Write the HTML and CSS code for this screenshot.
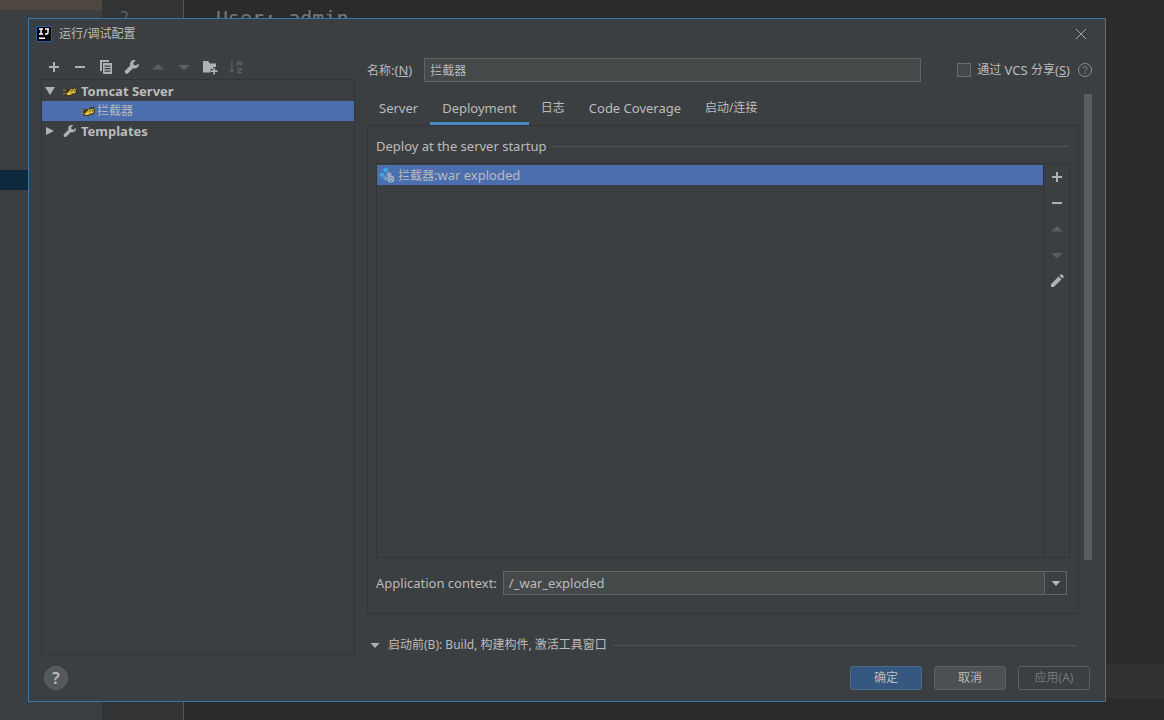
FILE: index.html
```html
<!DOCTYPE html>
<html lang="zh-CN">
<head>
<meta charset="utf-8">
<title>运行/调试配置</title>
<link rel="stylesheet" href="styles.css">
</head>
<body>
<svg class="defs" aria-hidden="true">
  <symbol id="plus" viewBox="0 0 16 16"><path d="M7 3h2v4h4v2H9v4H7V9H3V7h4z"/></symbol>
  <symbol id="minus" viewBox="0 0 16 16"><path d="M3 7h10v2H3z"/></symbol>
  <symbol id="copy" viewBox="0 0 16 16"><path d="M2 1h9v2H4v9H2zM5 4h9v11H5zM6.500 6.500v1.200h6V6.500zm0 2.500v1.200h6V9zm0 2.500v1.200h6v-1.200z" fill-rule="evenodd"/></symbol>
  <symbol id="wrench" viewBox="0 0 16 16"><path d="M14.600 4.200l-2.500 2.300-2.300-.500-.500-2.200 2.400-2.400C9.900.700 7.800 1.200 6.700 2.700c-.9 1.200-.9 2.600-.4 3.800l-5 5c-.8.800-.8 2 0 2.700.8.800 2 .800 2.700 0l5.100-5c1.500.600 3.300.300 4.500-.900 1.100-1.100 1.400-2.700 1-4.100z"/></symbol>
  <symbol id="up" viewBox="0 0 16 16"><path d="M2 10.500h12L8 5z"/></symbol>
  <symbol id="down" viewBox="0 0 16 16"><path d="M2 6h12l-6 5.500z"/></symbol>
  <symbol id="folder" viewBox="0 0 16 16"><path d="M1 2h5l2 2.500h6V8h-3v2H8.500v3.500H1z"/><path d="M11.300 9h1.700v2.200h2.500V13H13v2.500h-1.700V13H9v-1.800h2.300z"/></symbol>
  <symbol id="sort" viewBox="0 0 16 16"><path d="M3.200 2h1.300v9h2L3.800 14 1 11h2.200zM9 7V4.200C9 1.300 14 1.300 14 4.200V7h-1.300V5.600h-2.400V7zm1.300-2.500h2.400c-.2-1.300-2.200-1.300-2.400 0zM9 9h5v1.200L10.900 13H14v1.200H9V13l3.100-2.800H9z"/></symbol>
  <symbol id="pencil" viewBox="0 0 16 16"><path d="M2 11.200L9.600 3.600l2.800 2.800L4.800 14H2zM10.500 2.700l1-1c.6-.6 1.300-.6 1.800 0l1 1c.6.500.6 1.200 0 1.800l-1 1z"/></symbol>
  <symbol id="caret" viewBox="0 0 16 16"><path d="M3.500 6h9L8 11z"/></symbol>
  <symbol id="tomcat" viewBox="0 0 16 16"><path d="M1 6l4 0 3 0 2-2 5-1 1 6-2 3-3 0-2 2-6-1-2-2 2-2z" fill="#38321c"/><path d="M4 11l4-4 2-2 1.500 1.500L14 4.500l.8 4.500-2.300 2-2-.400L9 12.500l-5-.500z" fill="#d9b431"/><path d="M0 6.500l4 1M0 11.500l4-1M8.500 6l2 1" stroke="#b98b25" fill="none"/><path d="M9.500 7.500h1.400v1.200H9.500zM12.500 7h1.200v1.200h-1.200z" fill="#25221a"/><path d="M5 12l3-.500M11 9.500h2" stroke="#f4df83"/></symbol>
  <symbol id="artifact" viewBox="0 0 16 16"><path d="M6.500 0l3 3-3 3-3-3zM3 5l3 3-3 3-3-3z" fill="#40a8dd"/><path d="M10 4.500l3 3-3 3-3-3z" fill="#91a8bd"/><path d="M6.500 8.500l2.700 2.700-2.700 2.700-2.700-2.700z" fill="#6f9bc2"/><circle cx="11.800" cy="12" r="3.500" fill="#a4b5c8"/><path d="M10 12.500c1-2.500 3-2 3.500-1M10.500 13.500c1 .700 2.500.300 3-1" fill="none" stroke="#52709d"/></symbol>
</svg>

<div class="editor" aria-hidden="true">
  <div class="project"><div class="project-tab"></div><div class="project-row"></div></div>
  <div class="gutter">2</div>
  <div class="code"><span>User: admin</span><div class="caret-row"></div></div>
</div>

<main class="dialog">
  <header class="titlebar">
    <svg class="logo" viewBox="0 0 16 16" aria-hidden="true"><rect x=".5" y=".5" width="15" height="15" fill="#05070d" stroke="#285d9f"/><path d="M3 3h4M5 3v5M3 8h4M9 3h4M12 3v3.500Q12 8 10.500 8H9" fill="none" stroke="#fff" stroke-width="1.400"/><path d="M3 11.500h6v1.500H3z" fill="#fff"/></svg>
    <h1>运行/调试配置</h1>
    <button class="close" aria-label="关闭"><svg viewBox="0 0 12 12"><path d="M1 1l10 10M11 1L1 11" fill="none" stroke="currentColor"/></svg></button>
  </header>

  <div class="content">
    <aside class="sidebar">
      <div class="toolbar">
        <button aria-label="添加"><svg class="icon"><use href="#plus"/></svg></button>
        <button aria-label="移除"><svg class="icon"><use href="#minus"/></svg></button>
        <button aria-label="复制"><svg class="icon"><use href="#copy"/></svg></button>
        <button aria-label="编辑模板"><svg class="icon"><use href="#wrench"/></svg></button>
        <button aria-label="上移" disabled><svg class="icon"><use href="#up"/></svg></button>
        <button aria-label="下移" disabled><svg class="icon"><use href="#down"/></svg></button>
        <button aria-label="新建文件夹"><svg class="icon"><use href="#folder"/></svg></button>
        <button aria-label="排序" disabled><svg class="icon"><use href="#sort"/></svg></button>
      </div>
      <ul class="tree" role="tree">
        <li class="group" role="treeitem" aria-expanded="true"><svg class="twisty" viewBox="0 0 10 10"><path d="M0 1h10L5 9z"/></svg><svg class="node-icon"><use href="#tomcat"/></svg>Tomcat Server</li>
        <li class="leaf selected" role="treeitem" aria-selected="true"><svg class="node-icon"><use href="#tomcat"/></svg><span class="cjk">拦截器</span></li>
        <li class="group" role="treeitem" aria-expanded="false"><svg class="twisty" viewBox="0 0 10 10"><path d="M1 1v8l8-4z"/></svg><svg class="node-icon"><use href="#wrench"/></svg>Templates</li>
      </ul>
    </aside>

    <section class="settings">
      <div class="name-row">
        <label for="name"><span class="cjk">名称</span>:(<u>N</u>)</label>
        <input class="field cjk" id="name" type="text" value="拦截器">
        <label class="share"><input type="checkbox"><span class="cjk">通过</span> VCS <span class="cjk">分享</span>(<u>S</u>)</label>
        <button class="hint" aria-label="帮助"><svg viewBox="0 0 16 16"><circle cx="8" cy="8" r="6.500"/><path d="M6 6.500c0-2.600 4-2.600 4 0C10 8 8 8 8 9.500M8 10.700V12"/></svg></button>
      </div>
      <div class="scroll">
        <div class="scroll-body">
          <div class="tabs" role="tablist">
            <button role="tab">Server</button>
            <button role="tab" class="active" aria-selected="true">Deployment</button>
            <button role="tab" class="cjk">日志</button>
            <button role="tab">Code Coverage</button>
            <button role="tab" class="cjk">启动/连接</button>
          </div>
          <div class="panel" role="tabpanel">
            <h2 class="rule">Deploy at the server startup</h2>
            <div class="deploy">
              <ul class="artifacts">
                <li><svg class="icon"><use href="#artifact"/></svg><span><span class="cjk">拦截器</span>:war exploded</span></li>
              </ul>
              <div class="side-tools">
                <button aria-label="添加"><svg class="icon"><use href="#plus"/></svg></button>
                <button aria-label="移除"><svg class="icon"><use href="#minus"/></svg></button>
                <button aria-label="上移" disabled><svg class="icon"><use href="#up"/></svg></button>
                <button aria-label="下移" disabled><svg class="icon"><use href="#down"/></svg></button>
                <button aria-label="编辑"><svg class="icon"><use href="#pencil"/></svg></button>
              </div>
            </div>
            <div class="context">
              <label for="context">Application context:</label>
              <div class="combo"><input id="context" type="text" value="/_war_exploded"><button aria-label="展开"><svg class="icon"><use href="#caret"/></svg></button></div>
            </div>
          </div>
          <button class="before rule cjk"><svg class="icon"><use href="#caret"/></svg>启动前(B): Build, 构建构件, 激活工具窗口</button>
        </div>
        <div class="scrollbar"><div class="thumb"></div></div>
      </div>
    </section>
  </div>

  <footer class="footer">
    <button class="help" aria-label="帮助">?</button>
    <button class="btn primary">确定</button>
    <button class="btn">取消</button>
    <button class="btn" disabled>应用(A)</button>
  </footer>
</main>
</body>
</html>
```

FILE: styles.css
```css
* { box-sizing: border-box; }

body {
  margin: 0;
  height: 100vh;
  overflow: hidden;
  background: #2b2b2b;
  color: #bbbbbb;
  font: 13px/20px "Noto Sans", "Noto Sans CJK SC", sans-serif;
}

button, input { font: inherit; color: inherit; margin: 0; }
button { padding: 0; border: 0; background: none; }
ul { list-style: none; margin: 0; padding: 0; }
svg { display: block; flex: none; fill: #afb1b3; }
.defs { display: none; }
.icon { width: 16px; height: 16px; }
.cjk { font-size: 12px; }
button:disabled svg { fill: #5b5e60; }

/* Editor behind the dialog */
.editor {
  display: grid;
  grid-template-columns: 102px 82px 1fr;
  height: 100%;
}
.project { background: #3c3f41; }
.project-tab { height: 10px; background: #4d4740; }
.project-row { height: 20px; margin-top: 160px; background: #0d293e; }
.gutter {
  padding: 8px 54px 0 0;
  border-right: 1px solid #555555;
  background: #313335;
  color: #606366;
  font: 15px/20px "DejaVu Sans Mono", monospace;
  text-align: right;
}
.code {
  display: flex;
  flex-direction: column;
  justify-content: space-between;
  padding: 8px 0 22px;
  color: #77797b;
  font: 20px/20px "DejaVu Sans Mono", monospace;
}
.code span { padding-left: 32px; }
.caret-row { height: 34px; background: #323232; }

/* Dialog window */
.dialog {
  position: absolute;
  inset: 18px 58px 18px 28px;
  display: flex;
  flex-direction: column;
  border: 1px solid #3079b0;
  background: #3c3f41;
}
.titlebar { display: flex; align-items: center; gap: 7px; height: 30px; padding: 0 18px 0 7px; }
.titlebar h1 { flex: 1; margin: 0; font-size: 12px; font-weight: 400; }
.logo { width: 16px; height: 16px; }
.close { color: #a5a7a8; }
.close svg { width: 12px; height: 12px; }

.content { display: flex; flex: 1; gap: 12px; min-height: 0; padding: 0 10px 0 12px; }

.sidebar { display: flex; flex-direction: column; flex: 0 0 314px; padding-top: 5px; }
.toolbar { display: flex; height: 25px; }
.toolbar button { display: grid; place-items: center; width: 26px; }
.tree { flex: 1; border: 1px solid #323537; padding-top: 1px; }
.tree li { display: flex; align-items: center; height: 20px; padding-left: 3px; }
.tree .group { font-weight: 700; }
.tree .leaf { padding-left: 39px; }
.tree .selected { background: #4b6eaf; }
.twisty { width: 10px; height: 10px; margin-right: 8px; }
.node-icon { width: 14px; height: 14px; margin-right: 4px; }
.leaf .node-icon { margin-right: 2px; }

.settings { display: flex; flex-direction: column; flex: 1; min-width: 0; padding-top: 9px; }
.name-row { display: flex; align-items: center; height: 24px; padding-right: 2px; }
.field { flex: 1; min-width: 0; height: 24px; margin: 0 36px 0 12px; padding: 0 5px; border: 1px solid #646464; background: #45494a; }
.share { display: flex; align-items: center; white-space: pre; }
.share input { appearance: none; width: 14px; height: 14px; margin-right: 6px; border: 1px solid #6b6b6b; background: #43494a; }
.hint { margin-left: 7px; }
.hint svg { width: 16px; height: 16px; fill: none; stroke: #8c8e90; }

.scroll { display: flex; flex: 1; min-height: 0; gap: 4px; margin-top: 12px; }
.scroll-body { flex: 1; min-width: 0; display: flex; flex-direction: column; }
.scrollbar { width: 12px; }
.thumb { width: 8px; height: 83%; margin-left: 1px; background: #595b5d; }

.tabs { display: flex; height: 31px; }
.tabs button { padding: 0 12px; border-bottom: 3px solid transparent; }
.tabs .active { border-color: #4a88c7; }

.panel { display: flex; flex-direction: column; flex: 1; padding: 10px 8px 18px; border: 1px solid #323537; }
.rule { display: flex; align-items: center; }
.rule::after { content: ""; flex: 1; height: 1px; margin-left: 6px; background: #515456; }
.panel h2 { margin: 0 2px 0 0; font-size: 13px; font-weight: 400; }
.deploy { display: flex; flex: 1; margin-top: 7px; border: 1px solid #323537; }
.artifacts { flex: 1; padding-top: 1px; }
.artifacts li { display: flex; align-items: center; gap: 3px; height: 20px; padding-left: 2px; background: #4b6eaf; }
.side-tools { width: 26px; border-left: 1px solid #323537; }
.side-tools button { display: grid; place-items: center; width: 25px; height: 26px; }
.context { display: flex; align-items: center; gap: 6px; margin: 13px 3px 0 0; }
.combo { display: flex; flex: 1; height: 24px; border: 1px solid #646464; }
.combo input { flex: 1; min-width: 0; padding: 0 5px; border: 0; background: #45494a; }
.combo button { display: grid; place-items: center; width: 22px; border-left: 1px solid #646464; }

.before { height: 20px; margin: 21px 3px 0 0; text-align: left; }
.before .icon { margin-right: 5px; }

.footer { display: flex; align-items: center; gap: 12px; height: 46px; padding: 0 15px; }
.help { width: 24px; height: 24px; margin-right: auto; border: 1px solid #606365; border-radius: 50%; background: #55585a; font-size: 16px; font-weight: 600; line-height: 20px; }
.btn { width: 72px; height: 24px; border: 1px solid #5e6060; border-radius: 3px; background: #4c5052; font-size: 12px; }
.btn.primary { border-color: #4c708c; background: #365880; }
.btn:disabled { background: none; color: #777777; }
```
